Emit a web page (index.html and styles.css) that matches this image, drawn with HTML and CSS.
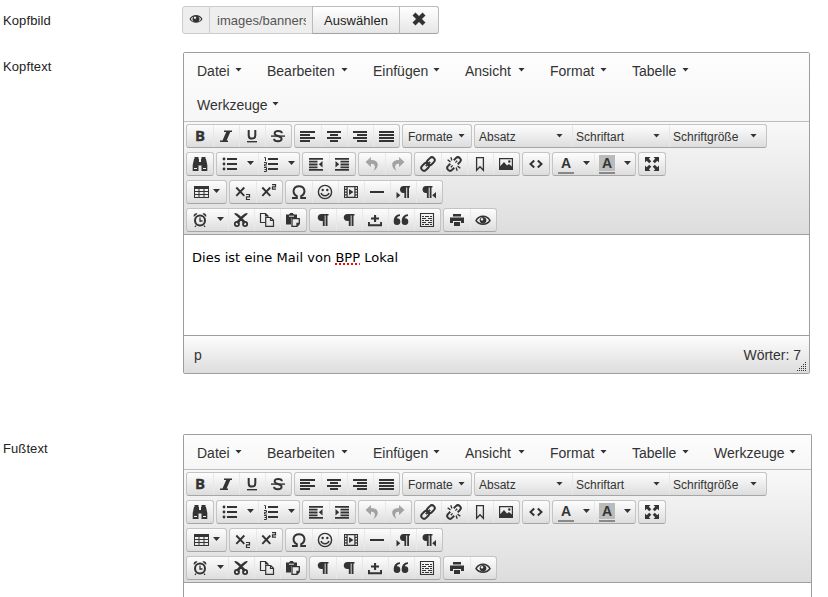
FILE: index.html
```html
<!DOCTYPE html>
<html lang="de">
<head>
<meta charset="utf-8">
<title>Mailvorlage</title>
<link rel="stylesheet" href="styles.css">
</head>
<body>
<svg class="sprite" aria-hidden="true">
  <symbol id="italic" viewBox="0 0 16 16"><path d="M6 2.500H14v1.500h-1.700L8.600 12.500H10V14H2v-1.500h2.500L8.200 4H6z"/></symbol>
  <symbol id="underline" viewBox="0 0 16 16"><path d="M3 13h10v1.400H3z"/><path d="M4.700 2v5.400c0 2 1.300 3.200 3.300 3.200s3.300-1.200 3.300-3.200V2" fill="none" stroke="currentColor" stroke-width="2"/></symbol>
  <symbol id="strike" viewBox="0 0 16 16"><path d="M1 7.400h14v1.400H1z"/><path d="M11.900 5.200c-.1-1.500-1.700-2.200-3.800-2.200S4.600 3.900 4.600 5.400s1.400 2 3.400 2.600 3.600 1.200 3.600 2.800-1.500 2.500-3.600 2.500-3.800-.8-4-2.400" fill="none" stroke="currentColor" stroke-width="1.900"/></symbol>
  <symbol id="left" viewBox="0 0 16 16"><path d="M0 3h15v2H0zM0 6h10v2H0zM0 9h15v2H0zM0 12h10v2H0z"/></symbol>
  <symbol id="center" viewBox="0 0 16 16"><path d="M1 3h14v2H1zM4 6h8v2H4zM1 9h14v2H1zM4 12h8v2H4z"/></symbol>
  <symbol id="right" viewBox="0 0 16 16"><path d="M1 3h14v2H1zM5 6h10v2H5zM1 9h14v2H1zM5 12h10v2H5z"/></symbol>
  <symbol id="justify" viewBox="0 0 16 16"><path d="M1 3h15v2H1zM1 6h15v2H1zM1 9h15v2H1zM1 12h15v2H1z"/></symbol>
  <symbol id="find" viewBox="0 0 16 16"><path d="M2.500 1h4v2h.5v3h2V3h.5V1h4v2h.5l1.300 6v6H9.500V9.500h-3V15H.7V9L2 3h.5z"/><path d="M2 12.500h3M11 12.500h3" stroke="#eee" stroke-width="1"/></symbol>
  <symbol id="bullets" viewBox="0 0 16 16"><path d="M5 2h10v2H5zM5 7h10v2H5zM5 12h10v2H5z"/><circle cx="2" cy="3" r="1.400"/><circle cx="2" cy="8" r="1.400"/><circle cx="2" cy="13" r="1.400"/></symbol>
  <symbol id="numbers" viewBox="0 0 16 16"><path d="M5 2h10v2H5zM5 7h10v2H5zM5 12h10v2H5z"/><path d="M1.300 1.500h1.200V5M1 6.500h2.500v1.800h-2V10h2.300M1 11.500h2.500v4H1M1.500 13.500h2" fill="none" stroke="currentColor" stroke-width="1"/></symbol>
  <symbol id="outdent" viewBox="0 0 16 16"><path d="M1 2h14v1.800H1zM1 4.800h8.500v1.800H1zM1 7.600h8.500v1.800H1zM1 10.400h8.500v1.800H1zM1 13h14v1.700H1zM14.500 5v6.500L10.800 8.200z"/></symbol>
  <symbol id="indent" viewBox="0 0 16 16"><path d="M1 2h14v1.800H1zM6.500 4.800H15v1.800H6.500zM6.500 7.600H15v1.800H6.500zM6.500 10.400H15v1.800H6.500zM1 13h14v1.700H1zM1.500 5v6.500l3.700-3.300z"/></symbol>
  <symbol id="undo" viewBox="0 0 16 16"><path d="M7 1L1.500 6 7 11V7.800c3.800-.2 5.200 2.300 2.500 7.200C16 10.500 15 4 7 4z"/></symbol>
  <symbol id="redo" viewBox="0 0 16 16"><path d="M9 1l5.500 5L9 11V7.800c-3.800-.2-5.200 2.300-2.500 7.200C0 10.500 1 4 9 4z"/></symbol>
  <symbol id="link" viewBox="0 0 16 16"><g fill="none" stroke="currentColor" stroke-width="2" transform="rotate(-45 8 8)"><rect x="-.3" y="5.200" width="8.600" height="5.600" rx="2.800"/><rect x="7.700" y="5.200" width="8.600" height="5.600" rx="2.800"/><path d="M5 8h6"/></g></symbol>
  <symbol id="unlink" viewBox="0 0 16 16"><g fill="none" stroke="currentColor" stroke-width="2" transform="rotate(-45 8 8)"><path d="M5.500 5.200H2.500a2.800 2.800 0 0 0 0 5.600h3M10.500 5.200h3a2.800 2.800 0 0 1 0 5.600h-3"/><path stroke-width="1.300" d="M7 4L6.500 .5M9 4L10.500 1M7 12l-1.500 3M9 12l.5 3.500M3.500 8H6M10 8h2.500"/></g></symbol>
  <symbol id="bookmark" viewBox="0 0 16 16"><path d="M4.600 1.700h6.800v12.600L8 10.800l-3.400 3.500z" fill="none" stroke="currentColor" stroke-width="1.300"/></symbol>
  <symbol id="image" viewBox="0 0 16 16"><path fill-rule="evenodd" d="M1 2h14v12H1zM2.200 3.200v7L6 6l3 3.500L11 8l2.800 2.500V3.200z"/><circle cx="11.300" cy="5.500" r="1.200"/></symbol>
  <symbol id="code" viewBox="0 0 16 16"><path d="M6.200 4.500L2.500 8l3.700 3.500M9.800 4.500L13.500 8l-3.700 3.500" fill="none" stroke="currentColor" stroke-width="2"/></symbol>
  <symbol id="full" viewBox="0 0 16 16"><path d="M1 1h5.500L4.800 2.700l2.500 2.500-2.100 2.100-2.500-2.500L1 6.500zM15 1v5.500l-1.700-1.700-2.500 2.500-2.100-2.100 2.500-2.500L9.500 1zM15 15H9.500l1.700-1.700-2.500-2.500 2.100-2.100 2.500 2.500L15 9.500zM1 15V9.500l1.700 1.700 2.500-2.500 2.100 2.100-2.500 2.500L6.500 15z"/></symbol>
  <symbol id="table" viewBox="0 0 16 16"><path fill-rule="evenodd" d="M1 2h15v12H1zM2 5v2h3.500V5zM6.500 5v2h4V5zM11.500 5v2H15V5zM2 8v2h3.500V8zM6.500 8v2h4V8zM11.500 8v2H15V8zM2 11v2h3.500v-2zM6.500 11v2h4v-2zM11.500 11v2H15v-2z"/></symbol>
  <symbol id="sub" viewBox="0 0 16 16"><path d="M1.300 3.500l8 8.300M9.300 3.500l-8 8.300" fill="none" stroke="currentColor" stroke-width="1.900"/><path d="M11 10.500h3.500v2.300h-3v2.700H15" fill="none" stroke="currentColor" stroke-width="1.200"/></symbol>
  <symbol id="sup" viewBox="0 0 16 16"><path d="M1.300 3.500l8 8.300M9.300 3.500l-8 8.300" fill="none" stroke="currentColor" stroke-width="1.900"/><path d="M11 .6h3.500v2.200h-3v2.400H15" fill="none" stroke="currentColor" stroke-width="1.200"/></symbol>
  <symbol id="omega" viewBox="0 0 16 16"><path d="M1 14h4.800v-1.800C.7 9.500 1.800 2.200 8 2.200s7.300 7.300 2.200 10V14H15" fill="none" stroke="currentColor" stroke-width="2"/></symbol>
  <symbol id="smile" viewBox="0 0 16 16"><circle cx="8" cy="8" r="6.600" fill="none" stroke="currentColor" stroke-width="1.400"/><circle cx="5.700" cy="6" r="1.200"/><circle cx="10.300" cy="6" r="1.200"/><path d="M4 9c1.300 3.600 6.700 3.600 8 0" fill="none" stroke="currentColor" stroke-width="1.400"/></symbol>
  <symbol id="media" viewBox="0 0 16 16"><path fill-rule="evenodd" d="M1 2h14v12H1zM2 3.200v1.500h1.500V3.200zM2 6v1.500h1.500V6zM2 8.700v1.500h1.500V8.700zM2 11.400v1.500h1.500v-1.500zM12.500 3.200v1.500H14V3.200zM12.500 6v1.500H14V6zM12.500 8.700v1.500H14V8.700zM12.500 11.400v1.500H14v-1.500zM4.700 3.200v9.600h6.600V3.200z"/><path d="M6 5l4.500 3L6 11z"/></symbol>
  <symbol id="rule" viewBox="0 0 16 16"><path d="M1 7h14v2H1z"/></symbol>
  <symbol id="pilcrow" viewBox="0 0 16 16"><path d="M6.500 2H13.500v1.600h-1V14h-1.900V3.600H9.700V14H7.800V9H6.500C1.500 9 1.500 2 6.500 2z"/></symbol>
  <symbol id="ltr" viewBox="0 0 16 16"><path d="M8.500 2H15v1.500h-1V14h-1.800V3.500h-1V14H9.400V9h-1C3.900 9 3.900 2 8.500 2zM1.500 8l3.800 3.200-3.800 3.300z"/></symbol>
  <symbol id="rtl" viewBox="0 0 16 16"><path d="M5 2h6.500v1.500h-1V14H8.700V3.500h-1V14H5.900V9H5C.4 9 .4 2 5 2zM15 8v6.500l-3.800-3.300z"/></symbol>
  <symbol id="clock" viewBox="0 0 16 16"><circle cx="8" cy="8.600" r="5" fill="none" stroke="currentColor" stroke-width="2"/><path d="M8 5.500V9h2.500M4 13.500l-1 1.500M12 13.500l1 1.500" fill="none" stroke="currentColor" stroke-width="1.300"/><path d="M5.500 1.700C3.500.5 1 2.500 1.800 5zM10.500 1.700c2-1.200 4.500.8 3.700 3.300z"/></symbol>
  <symbol id="cut" viewBox="0 0 16 16"><path d="M2 2.500C3.500 1.200 8.500 7 12 11M14 2.500C12.500 1.200 7.500 7 4 11" fill="none" stroke="currentColor" stroke-width="2.700"/><circle cx="3.900" cy="12" r="2.100" fill="none" stroke="currentColor" stroke-width="1.800"/><circle cx="12.100" cy="12" r="2.100" fill="none" stroke="currentColor" stroke-width="1.800"/></symbol>
  <symbol id="copy" viewBox="0 0 16 16"><path d="M6.500 10.500h-5v-9h5l2.500 2.500v2M6.500 1.500V4H9M6.700 5.500h5l2.800 2.800v6H6.700zM11.500 5.500v3h3" fill="none" stroke="currentColor" stroke-width="1.200"/></symbol>
  <symbol id="paste" viewBox="0 0 16 16"><path d="M1 2.500h3L5.300 1h2.400L9 2.500h3V6H6v6.500H1z"/><path d="M4 4.200h5" stroke="#eee" stroke-width="1"/><path d="M7 6.700h7.300v5L12 14.300H7zM14.300 11.500H12v2.800" fill="none" stroke="currentColor" stroke-width="1.300"/></symbol>
  <symbol id="insert" viewBox="0 0 16 16"><path d="M1 10h1.900v2.200h10.200V10H15v4.200H1zM7 3h2.100v2.500H12v2H9.100V10H7V7.500H4v-2h3z"/></symbol>
  <symbol id="quote" viewBox="0 0 16 16"><path d="M7 2.200C3.100 2.300.7 5 .7 9.700a3.300 3.300 0 1 0 3.100-3.400c.4-1.200 1.400-2 3.200-2.200zM15 2.200c-3.900.1-6.300 2.800-6.300 7.500a3.300 3.300 0 1 0 3.100-3.400c.4-1.200 1.400-2 3.200-2.200z"/></symbol>
  <symbol id="template" viewBox="0 0 16 16"><path d="M1.500 1.500h13v13h-13z" fill="none" stroke="currentColor" stroke-width="1.100"/><path d="M3 4.500h2M6 4.500h4M11 4.500h2M3 6.500h4M9 6.500h4M3 8.500h2M6 8.500h4M11 8.500h2M3 10.500h4M9 10.500h4M3 12.500h2M6 12.500h4M11 12.500h2" fill="none" stroke="currentColor" stroke-width="1"/></symbol>
  <symbol id="print" viewBox="0 0 16 16"><path fill-rule="evenodd" d="M4 2h8v2.500H4zM1 5.500h14v5.500h-3V9H4v2H1zM5 10h6v4H5z"/></symbol>
  <symbol id="eye" viewBox="0 0 16 16"><path d="M1 8.500c3.200-5.600 10.800-5.600 14 0-3.200 5-10.800 5-14 0z" fill="none" stroke="currentColor" stroke-width="1.500"/><path fill-rule="evenodd" d="M8 4.900a3.400 3.400 0 1 0 .01 0zM7 6a1.300 1.300 0 1 1-.01 0z"/></symbol>
  <symbol id="solid-eye" viewBox="0 0 16 16"><path fill-rule="evenodd" d="M1.500 8C4 2.700 12 2.700 14.500 8 12 13 4 13 1.500 8zM2.900 8c.7 1.400 1.700 2.300 2.600 2.700-1.400-1.600-1.400-3.900 0-5.300C4.500 5.900 3.500 6.800 2.900 8zM13.100 8c-.6-1.200-1.600-2.100-2.600-2.600 1.400 1.400 1.400 3.700 0 5.300.9-.4 1.900-1.300 2.600-2.700zM7 5.500a1.200 1.200 0 1 0 .01 0z"/></symbol>
  <symbol id="close" viewBox="0 0 16 16"><path d="M3 3l10 10M13 3L3 13" stroke="currentColor" stroke-width="4.200"/></symbol>
</svg>

<main class="form">
  <div class="row row-image">
    <label class="label">Kopfbild</label>
    <div class="picker">
      <span class="addon"><svg class="icon"><use href="#solid-eye"/></svg></span>
      <span class="path"><span class="path-text">images/banners</span></span>
      <button class="pick">Auswählen</button>
      <button class="clear"><svg class="icon cross"><use href="#close"/></svg></button>
    </div>
  </div>

  <div class="row row-head">
    <label class="label">Kopftext</label>
    <section class="editor editor-head">
      <div class="chrome">
        <nav class="menubar">
          <span class="menu m-datei">Datei</span><span class="menu m-bearbeiten">Bearbeiten</span><span class="menu m-einfuegen">Einfügen</span><span class="menu m-ansicht">Ansicht</span><span class="menu m-format">Format</span><span class="menu m-tabelle">Tabelle</span><span class="menu m-werkzeuge">Werkzeuge</span>
        </nav>
        <div class="toolbars"></div>
      </div>
      <div class="content">Dies ist eine Mail von <span class="misspelt">BPP</span> Lokal</div>
      <footer class="status"><span>p</span><span>Wörter: 7</span>
        <svg class="grip" viewBox="0 0 10 10"><path d="M8 0h1v1H8zM6 2h1v1H6zM8 2h1v1H8zM4 4h1v1H4zM6 4h1v1H6zM8 4h1v1H8zM2 6h1v1H2zM4 6h1v1H4zM6 6h1v1H6zM8 6h1v1H8zM0 8h1v1H0zM2 8h1v1H2zM4 8h1v1H4zM6 8h1v1H6zM8 8h1v1H8z"/></svg>
      </footer>
    </section>
  </div>

  <div class="row row-foot">
    <label class="label">Fußtext</label>
    <section class="editor editor-foot">
      <div class="chrome">
        <nav class="menubar">
          <span class="menu m-datei">Datei</span><span class="menu m-bearbeiten">Bearbeiten</span><span class="menu m-einfuegen">Einfügen</span><span class="menu m-ansicht">Ansicht</span><span class="menu m-format">Format</span><span class="menu m-tabelle">Tabelle</span><span class="menu m-werkzeuge">Werkzeuge</span>
        </nav>
        <div class="toolbars"></div>
      </div>
    </section>
  </div>
</main>
<script src="toolbar.js"></script>
</body>
</html>
```
FILE: toolbar.js
```js
// Toolbar rows, each a list of button groups. "+" marks a split button,
// "*" a compact menu button, "-" a disabled one and "=" a list box.
const rows = [
  ["bold italic underline strike", "left center right justify", "=Formate", "=Absatz =Schriftart =Schriftgröße"],
  ["find", "+bullets +numbers", "outdent indent", "-undo -redo", "link unlink bookmark image", "code", "+fore +back", "full"],
  ["*table", "sub sup", "omega smile media rule ltr rtl"],
  ["+clock cut copy paste", "pilcrow pilcrow insert quote template", "print eye"],
];

const lettered = {
  bold: '<span class="bold">B</span>',
  fore: '<span class="swatch">A</span>',
  back: '<span class="swatch back">A</span>',
};

function button(spec) {
  const kind = "+*-=".includes(spec[0]) ? spec[0] : "";
  const name = spec.slice(kind.length);
  if (kind === "=") {
    const size = name === "Formate" ? "list-narrow" : "list-wide";
    return `<span class="button list ${size}">${name}<i class="caret"></i></span>`;
  }
  const cls = { "+": "split", "*": "compact", "-": "disabled", "": "" }[kind];
  const face = lettered[name] || `<svg class="icon"><use href="#${name}"/></svg>`;
  const caret = kind === "+" || kind === "*" ? '<i class="caret"></i>' : "";
  return `<span class="button ${cls}">${face}${caret}</span>`;
}

const html = rows.map(groups =>
  `<div class="toolbar">${groups.map(g =>
    `<div class="group">${g.split(" ").map(button).join("")}</div>`).join("")}</div>`).join("");

document.querySelectorAll(".toolbars").forEach(el => { el.innerHTML = html; });
```
FILE: styles.css
```css
* { box-sizing: border-box; }
body {
  margin: 0;
  height: 597px;
  overflow: hidden;
  background: #fff;
  color: #333;
  font: 13px/18px "Liberation Sans", Arial, sans-serif;
}
.sprite { display: none; }
.form { padding: 6px 0 0 3px; }
.row { display: flex; align-items: flex-start; }
.row-image { height: 46px; }
.row-head { height: 382px; }
.label { color: #222; width: 180px; padding-top: 6px; flex: none; letter-spacing: .1px; }
.icon { width: 16px; height: 16px; fill: currentColor; flex: none; display: block; }

.picker { display: flex; height: 28px; margin-left: -1px; }
.addon {
  width: 28px; padding: 4px 0 0 5px;
  background: #eee; border: 1px solid #ccc; border-radius: 3px 0 0 3px;
}
.path {
  width: 102px; padding: 5px 6px 3px 7px;
  background: #eee; border: solid #ccc; border-width: 1px 0;
  color: #555;
}
.path-text { display: block; overflow: hidden; white-space: nowrap; }
.pick, .clear {
  margin: 0; padding: 0; border: 1px solid #bbb; border-bottom-color: #a2a2a2;
  background: linear-gradient(#fff, #e6e6e6);
  font: inherit; color: #333;
}
.pick { width: 88px; padding-top: 1px; letter-spacing: .05px; color: #222; }
.clear { width: 40px; margin-left: -1px; border-radius: 0 3px 3px 0; }
.cross { margin: -2px auto 0; }

.editor { border: 1px solid #9e9e9e; border-radius: 2px; flex: none; }
.editor-head { width: 627px; height: 322px; }
.editor-foot { width: 629px; height: 163px; border-bottom: 0; border-radius: 2px 2px 0 0; }
.chrome { border-bottom: 1px solid #9e9e9e; }
.menubar {
  display: flex; flex-wrap: wrap; border-bottom: 1px solid #bdbdbd;
  background: linear-gradient(#fdfdfd, #f6f6f6); font-size: 14px;
}
.menu {
  display: flex; justify-content: space-between; align-items: center;
  height: 34px; padding: 2px 12px 0 13px;
}
.menu::after, .caret {
  content: ""; flex: none; width: 7px; height: 4px;
  background: #333; clip-path: polygon(0 0, 100% 0, 50% 100%);
}
.menu::after { margin-top: -3px; }
.m-datei { width: 70px; }
.m-bearbeiten { width: 106px; }
.m-einfuegen { width: 92px; }
.m-ansicht { width: 85px; }
.m-format, .m-tabelle { width: 82px; }
.m-werkzeuge { width: 110px; padding-right: 15px; }
.editor-head .m-werkzeuge { width: 107px; padding-right: 12px; }
.editor-head .m-tabelle { margin-right: 20px; }

.toolbars { padding: 2px 2px 0; height: 112px; background: linear-gradient(#f8f8f8, #ddd); }
.toolbar { display: flex; gap: 2px; height: 28px; }
.group {
  display: flex; height: 24px;
  border: 1px solid #c4c4c4; border-bottom-color: #a6a6a6; border-radius: 3px;
  background: linear-gradient(#fdfdfd, #ddd);
}
.button { display: flex; align-items: center; width: 26px; padding-left: 5px; }
.button + .button { border-left: 1px solid #e8e8e8; padding-left: 4px; }
.split { width: 41px; gap: 9px; }
.caret { margin-top: -2px; }
.compact { width: 39px; gap: 4px; padding-left: 6px; }
.disabled .icon { opacity: .4; }
.list { font-size: 12px; justify-content: space-between; padding-top: 1px; }
.list-narrow { width: 68px; padding: 1px 6px 0 5px; }
.list-wide { width: 97px; padding: 1px 9px 0 4px; }
.button + .list-wide { padding: 1px 9px 0 3px; }
.bold {
  width: 16px; margin-top: -2px; font: bold 15px/18px "Open Sans", "Liberation Sans", sans-serif;
  text-align: center; -webkit-text-stroke: .3px;
}
.swatch {
  width: 16px; height: 19px; border-bottom: 2px solid #888;
  font: bold 14px/16px "Liberation Sans", Arial, sans-serif; text-align: center;
}
.back { background: linear-gradient(#bbb 16px, transparent 16px); }

.content {
  height: 100px; padding: 14px 8px;
  color: #000; font: 13px/18px "DejaVu Sans", Verdana, sans-serif; letter-spacing: .03px;
}
.misspelt {
  background: repeating-linear-gradient(90deg, #f00 0 2px, transparent 2px 4px) bottom / 100% 2px no-repeat;
}
.status {
  position: relative; display: flex; justify-content: space-between;
  height: 38px; padding: 10px 8px 0 10px;
  border-top: 1px solid #9e9e9e; background: linear-gradient(#fdfdfd, #ddd);
  font-size: 14px;
}
.grip { position: absolute; right: 2px; bottom: 1px; width: 10px; height: 10px; fill: #333; }
```
